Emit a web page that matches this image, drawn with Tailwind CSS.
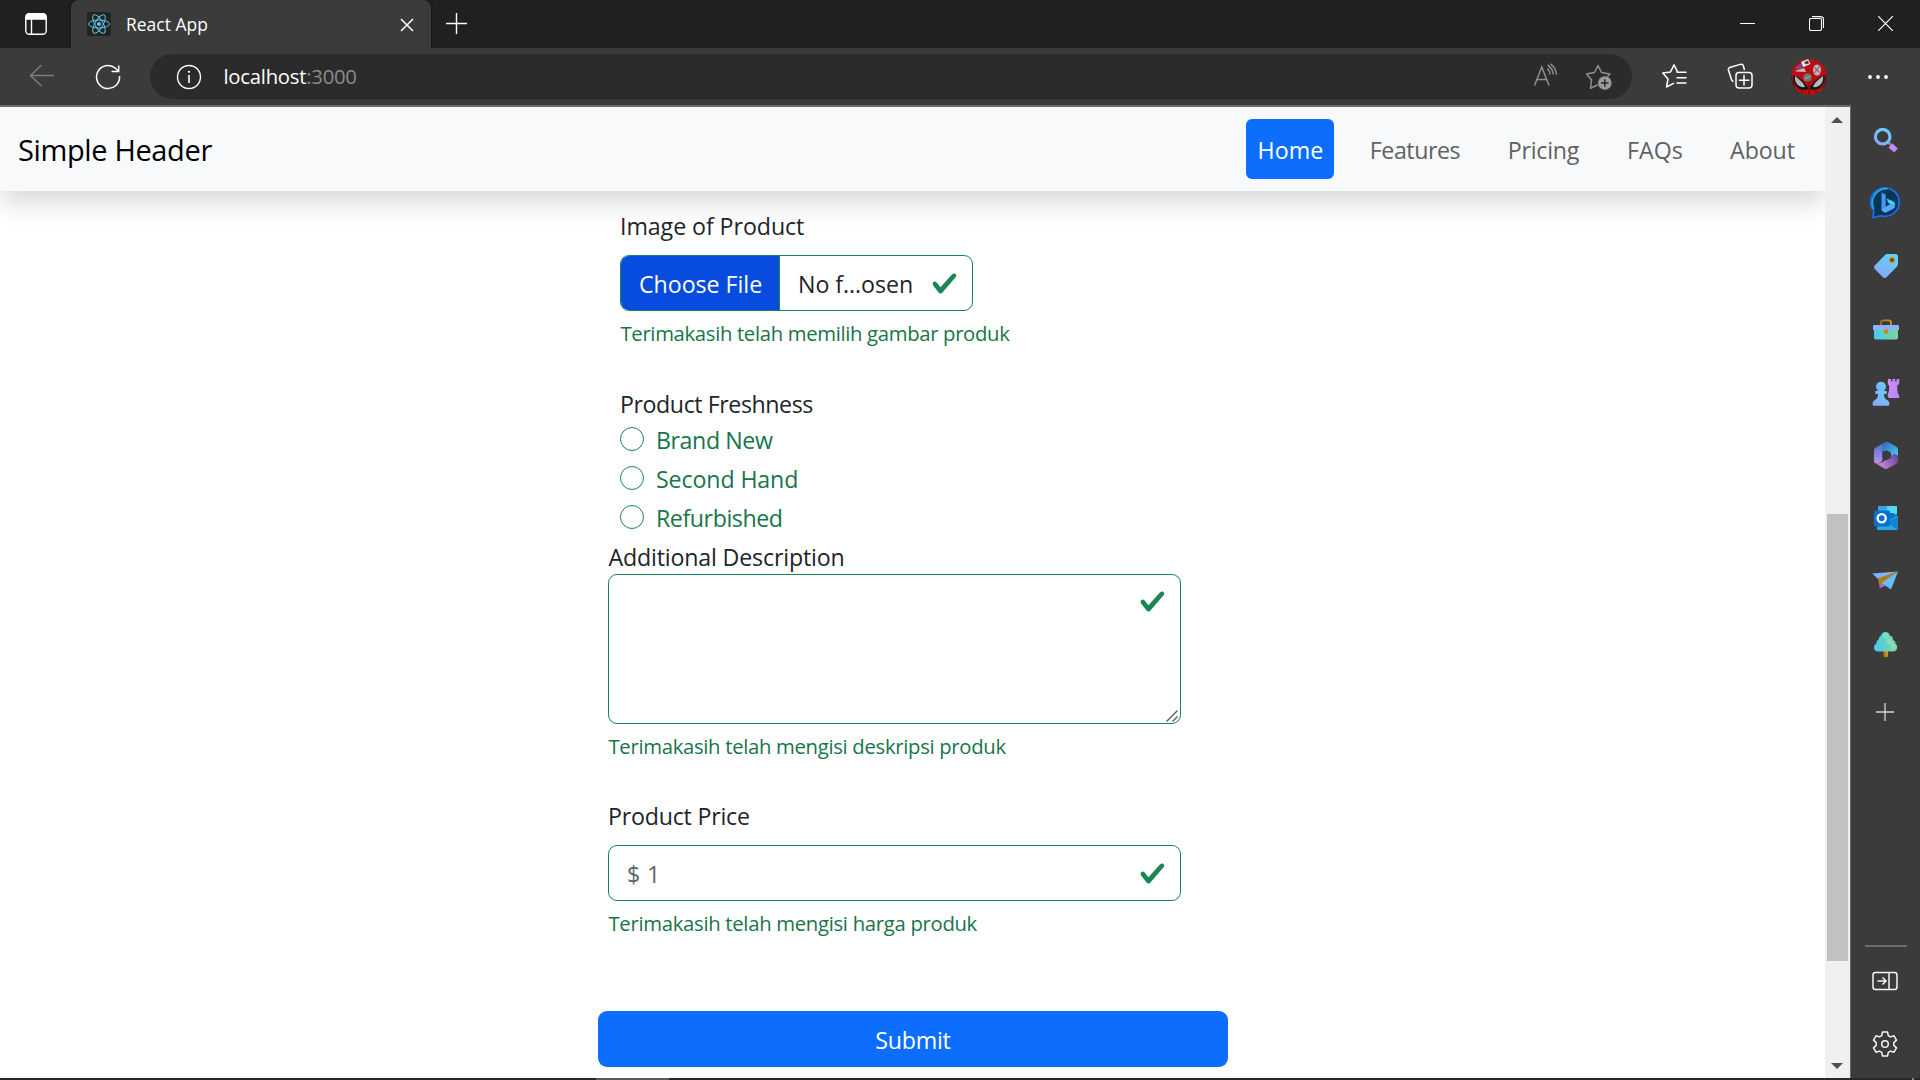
<!DOCTYPE html>
<html lang="en">
<head>
<meta charset="utf-8">
<title>React App</title>
<script src="https://cdn.jsdelivr.net/npm/@tailwindcss/browser@4"></script>
</head>
<body class="flex h-[1080px] w-[1920px] flex-col overflow-hidden bg-[#3b3b3b] font-['Open_Sans','Noto_Sans',sans-serif]">

<!-- shared definitions -->
<svg class="absolute h-0 w-0" aria-hidden="true">
  <defs>
    <linearGradient id="sky" x1="0.8" y1="0" x2="0.2" y2="1"><stop offset="0" stop-color="#62d2fb"/><stop offset="1" stop-color="#8aa5fc"/></linearGradient>
    <linearGradient id="violet" x1="0" y1="0" x2="1" y2="0.4"><stop offset="0" stop-color="#d78bf5"/><stop offset="1" stop-color="#b888fb"/></linearGradient>
    <linearGradient id="teal" x1="0" y1="0" x2="1" y2="0"><stop offset="0" stop-color="#45cdf0"/><stop offset="1" stop-color="#7ed49b"/></linearGradient>
    <linearGradient id="gold" x1="0" y1="0" x2="1" y2="0"><stop offset="0" stop-color="#a8700b"/><stop offset="1" stop-color="#d39a1b"/></linearGradient>
    <linearGradient id="ribbonA" x1="0" y1="0" x2="0" y2="1"><stop offset="0" stop-color="#3f72cf"/><stop offset="1" stop-color="#c18cf0"/></linearGradient>
    <linearGradient id="ribbonB" x1="0" y1="0" x2="1" y2="1"><stop offset="0" stop-color="#2f62c4"/><stop offset="1" stop-color="#4fd3f8"/></linearGradient>
    <linearGradient id="ribbonC" x1="0" y1="0.6" x2="1" y2="0.2"><stop offset="0" stop-color="#cf8fe0"/><stop offset="1" stop-color="#6a439f"/></linearGradient>
    <symbol id="check" viewBox="0 0 8 8"><path fill="#198754" d="M2.3 6.73.6 4.53c-.4-1.04.46-1.4 1.1-.8l1.1 1.4 3.4-3.8c.6-.63 1.6-.27 1.2.7l-4 4.6c-.43.5-.8.4-1.1.1z"/></symbol>
  </defs>
</svg>

<!-- tab strip -->
<div class="flex h-12 shrink-0 bg-[#202020]">
  <div class="flex w-[71px] items-center pl-[25px]">
    <svg class="size-[22px]" viewBox="0 0 22 22" fill="none" stroke="#fff" stroke-width="1.4"><rect x=".8" y=".8" width="20.4" height="20.4" rx="3.5"/><path d="M1 6V4a3 3 0 0 1 3-3h14a3 3 0 0 1 3 3v2z" fill="#fff"/><path d="M6.500 6v15"/></svg>
  </div>
  <div class="flex w-[360px] items-center rounded-t-lg bg-[#3b3b3b] pl-4 shadow-[0_0_3px_rgba(0,0,0,0.6)]">
    <svg class="size-6" viewBox="0 0 24 24" fill="none" stroke="#5cc9e8" stroke-width="1"><rect width="24" height="24" rx="2" fill="#222" stroke="none"/><ellipse cx="12" cy="12" rx="10.5" ry="4"/><ellipse cx="12" cy="12" rx="10.5" ry="4" transform="rotate(60 12 12)"/><ellipse cx="12" cy="12" rx="10.5" ry="4" transform="rotate(120 12 12)"/><circle cx="12" cy="12" r="2" fill="#5cc9e8" stroke="none"/></svg>
    <span class="-mt-px ml-[15px] w-[274px] text-[17.4px] leading-6 tracking-[0.04px] text-white">React App</span>
    <svg class="mt-px size-[14px] shrink-0" viewBox="0 0 14 14" stroke="#fff" stroke-width="1.5"><path d="M1 1l12 12M13 1L1 13"/></svg>
  </div>
  <div class="flex flex-1 items-center pb-px pl-[15px]">
    <svg class="size-[21px]" viewBox="0 0 21 21" stroke="#fff" stroke-width="1.4"><path d="M10.500 0v21M0 10.500h21"/></svg>
  </div>
  <div class="flex items-center gap-[54px] pr-[27px] pb-px">
    <svg class="size-[15px]" viewBox="0 0 15 15" stroke="#fff"><path d="M0 7.500h15"/></svg>
    <svg class="size-[15px]" viewBox="0 0 15 15" fill="none" stroke="#fff" stroke-width="1.1"><rect x=".5" y="2.5" width="12" height="12" rx="1.5"/><path d="M3 .6h8.500a3 3 0 0 1 3 3V12"/></svg>
    <svg class="size-[15px]" viewBox="0 0 15 15" stroke="#fff" stroke-width="1.2"><path d="M0 0l15 15M15 0L0 15"/></svg>
  </div>
</div>

<!-- toolbar -->
<div class="flex h-[57px] shrink-0 items-center bg-[#3b3b3b]">
  <svg class="-mt-px ml-[29px] h-[26px] w-[26px]" viewBox="0 0 26 26" fill="none" stroke="#7b7b7b" stroke-width="1.5"><path d="M25 12.500H1.500M12.500 2L1.500 12.500L12.500 23"/></svg>
  <svg class="ml-[40px] size-[26px]" viewBox="0 0 26 26" fill="none" stroke="#fff" stroke-width="1.500"><path d="M24.500 12A11.500 11.500 0 1 1 20.500 4.300L23.500 7.300M23.700 1.500V7.500H16.500"/></svg>
  <div class="ml-[29px] flex h-[45px] w-[1482px] items-center rounded-full bg-[#2b2b2b] pr-[19px] pl-[26px]">
    <svg class="size-[26px]" viewBox="0 0 26 26" fill="none" stroke="#fff" stroke-width="1.4"><circle cx="13" cy="13" r="11.500"/><path d="M13 11v8" stroke-width="1.600"/><circle cx="13" cy="7.800" r="1.100" fill="#fff" stroke="none"/></svg>
    <span class="-mt-[2px] ml-[21.5px] flex-1 text-[20.3px] leading-7 tracking-[-0.25px] text-white">localhost<span class="text-[#8b8b8b]">:3000</span></span>
    <svg class="-mt-[2px] h-[26px] w-[26px]" viewBox="0 0 26 26" fill="none" stroke="#8f8f8f" stroke-width="1.500"><path d="M1.500 22.500L8.800 4L16 22.500M4 16.500h9.700M14.500 5.500a9 9 0 0 1 2.500 6M14.500 2a13 13 0 0 1 5.800 9.500M17.500 .8a15 15 0 0 1 6 11"/></svg>
    <svg class="ml-[26px] h-[28px] w-[28px]" viewBox="0 0 28 28" fill="none" stroke="#8f8f8f" stroke-width="1.500" stroke-linejoin="round"><path d="M12.500 22L5.500 25.200L6.500 16.800L1.500 11L9.500 9.500L13 2.500L16.500 9.500L25 11L22.500 13.500"/><circle cx="19.800" cy="20" r="6.800" fill="#9a9a9a" stroke="none"/><path d="M19.800 16.200v7.600M16 20h7.600" stroke="#2b2b2b"/></svg>
  </div>
  <svg class="-mt-px ml-[29px] h-[26px] w-[27px]" viewBox="0 0 27 26" fill="none" stroke="#fff" stroke-width="1.500" stroke-linejoin="round" stroke-linecap="round"><path d="M12.500 20.300L5.500 24L7 16L1.800 10L9.500 8.900L13 1.800L16.500 8.900M16 9.300h9M16 14.800h9M16 20h9"/></svg>
  <svg class="-mt-px ml-[39px] h-[26px] w-[26px]" viewBox="0 0 26 26" fill="none" stroke="#fff" stroke-width="1.500" stroke-linecap="round"><rect x="9" y="9.500" width="16" height="15.500" rx="3"/><path d="M17 12.500v9.500M12.300 17.300h9.500M17.300 6.500L16.500 3.200C16 1.500 14.800 1 13.300 1.400L3.500 4.200C1.800 4.700 1 5.500 1.400 7L4.500 16.500C4.800 17.500 5 17.800 6 18.300"/></svg>
  <svg class="ml-[38px] size-9" viewBox="0 0 36 36"><clipPath id="av"><circle cx="18" cy="18" r="18"/></clipPath><g clip-path="url(#av)"><rect width="36" height="36" fill="#b90f13"/><path d="M0 14L6 36H0zM36 14L30 36h6z" fill="#402120"/><path d="M2 16C8 18 15 23 17.500 30C9 33 2 28 2 16zM34 16C28 18 21 23 18.500 30C27 33 34 28 34 16z" fill="#161414"/><path d="M4 17C8 20 13 24 14 28C8 29 3 24 4 17zM32 17C28 20 23 24 22 28C28 29 33 24 32 17z" fill="#b5b8b8"/><path d="M4 9l6-5 3 4-6 3z" fill="#8d4574"/><path d="M4 12l9-3 2 4-10-.5z" fill="#c7b5c4"/><path d="M10 3l7-3 2.500 5-7 3z" fill="#eee"/><path d="M13 3l4-1.500 1 3-3.500 1z" fill="#444"/><ellipse cx="26" cy="11" rx="4" ry="5.500" fill="#c9b0b4"/><path d="M23.500 8.500l5 5M28.500 7l-5 7" stroke="#7c6687" stroke-width="1.200"/><circle cx="16.500" cy="18.500" r="4" fill="#6d7775"/><path d="M13.500 20l6-3" stroke="#aaa"/><path d="M18 23v13M12 30l-2 6M24 30l2 6" stroke="#6d090b"/></g></svg>
  <svg class="ml-[40px] h-[6px] w-[22px]" viewBox="0 0 22 6" fill="#fff"><circle cx="3" cy="3" r="1.900"/><circle cx="11" cy="3" r="1.900"/><circle cx="19" cy="3" r="1.900"/></svg>
</div>

<div class="flex h-[973px] shrink-0">
  <!-- page viewport -->
  <div class="flex w-[1851px] border-t-2 border-r border-[#6b6b6b] bg-white">
    <div class="relative w-[1825px] overflow-hidden">
      <header class="flex h-[84px] items-center bg-[#f8f9fb] pr-2 pl-[18px] shadow-[0_12px_24px_rgba(0,0,0,0.15)]">
        <span class="flex-1 pt-[2px] text-[29px] leading-9 tracking-[-0.363px] text-black">Simple Header</span>
        <nav class="flex text-center text-[23.2px] leading-[60px] text-[#5f6163]">
          <a class="mr-3 h-[60px] w-[88px] rounded-md bg-[#0d6efd] pt-px pl-px tracking-[0.1px] text-white">Home</a>
          <a class="w-[138px] pt-px tracking-[-0.45px]">Features</a>
          <a class="w-[119px] pt-px tracking-[-0.23px]">Pricing</a>
          <a class="w-[104px] pt-px tracking-[0.032px]">FAQs</a>
          <a class="w-[110px] pt-px pl-px tracking-[-0.085px]">About</a>
        </nav>
      </header>

      <form class="ml-[598px] w-[630px] pt-[17px] text-[23.2px] leading-9 text-[#212529]">
        <div class="pl-[22px]">
          <label class="block tracking-[-0.07px]">Image of Product</label>
          <div class="mt-[11px] flex h-14 w-[353px] overflow-hidden rounded-[9px] border border-[#198754]">
            <div class="w-[159px] border-r border-[#198754] bg-[#084bdf] pt-[2px] pl-[18px] tracking-[-0.034px] text-white">
              <span class="block pt-[8px]">Choose File</span>
            </div>
            <span class="w-[151px] pt-[10px] pl-[18px] tracking-[-0.06px]">No f...osen</span>
            <svg class="mt-[13.5px] size-[27px]"><use href="#check"/></svg>
          </div>
          <p class="mt-[6px] pl-[0.5px] text-[20.3px] leading-8 tracking-[-0.33px] text-[#17754a]">Terimakasih telah memilih gambar produk</p>
          <div class="mt-[37px] tracking-[-0.43px]">Product Freshness</div>
          <div class="flex flex-col gap-[3px] pb-[3px] text-[#17754a]">
            <label class="flex"><i class="mt-[5px] mr-[12px] size-6 rounded-full border border-[#198754]"></i><span class="tracking-[-0.42px]">Brand New</span></label>
            <label class="flex"><i class="mt-[5px] mr-[12px] size-6 rounded-full border border-[#198754]"></i><span class="tracking-[-0.12px]">Second Hand</span></label>
            <label class="flex"><i class="mt-[5px] mr-[12px] size-6 rounded-full border border-[#198754]"></i><span class="tracking-[-0.44px]">Refurbished</span></label>
          </div>
        </div>
        <div class="w-[583px] pl-[10px]">
          <label class="block h-[35px] pl-[0.5px] tracking-[-0.17px]">Additional Description</label>
          <div class="relative h-[150px]">
            <textarea class="block h-full w-full resize-none rounded-[9px] border border-[#198754] bg-white"></textarea>
            <svg class="absolute top-[14px] right-[15px] size-[27px]"><use href="#check"/></svg>
            <svg class="absolute right-[3px] bottom-[2px] size-3" viewBox="0 0 12 12" stroke="#555" stroke-width="1.300"><path d="M.5 11.500L11.500 .5M6.500 11.500L11.500 6.500"/></svg>
          </div>
          <p class="mt-[6px] pl-[0.5px] text-[20.3px] leading-8 tracking-[-0.31px] text-[#17754a]">Terimakasih telah mengisi deskripsi produk</p>
          <label class="mt-9 block tracking-[-0.22px]">Product Price</label>
          <div class="relative mt-[11px] h-14">
            <input class="block h-full w-full rounded-[9px] border border-[#198754] bg-white pt-[2px] pl-[18px] tracking-[0.4px] placeholder:text-[#5f6569]" placeholder="$ 1">
            <svg class="absolute top-[14.5px] right-[15px] size-[27px]"><use href="#check"/></svg>
          </div>
          <p class="mt-[6px] pl-[0.5px] text-[20.3px] leading-8 tracking-[-0.3px] text-[#17754a]">Terimakasih telah mengisi harga produk</p>
        </div>
        <button type="button" class="mt-[72px] block h-14 w-full rounded-[9px] bg-[#0d6efd] pt-[2px] tracking-[-0.23px] text-white">Submit</button>
      </form>
    </div>
    <!-- scrollbar -->
    <div class="flex w-[25px] flex-col items-center bg-[#f0f0f0] pr-px">
      <svg class="mt-[10px] h-[6px] w-[12px]" viewBox="0 0 12 6" fill="#505050"><path d="M6 0l6 6H0z"/></svg>
      <div class="mt-[391px] h-[447px] w-[21px] bg-[#c1c1c1]"></div>
      <svg class="mt-[102px] h-[6px] w-[12px]" viewBox="0 0 12 6" fill="#505050"><path d="M6 6l6-6H0z"/></svg>
    </div>
  </div>

  <!-- sidebar -->
  <aside class="flex w-[69px] flex-col items-center pt-1">
    <div class="flex h-[63px] items-center"><svg class="size-[33px]" viewBox="0 0 33 33" fill="none"><path d="M19 18l3 3" stroke="#8a8a8a" stroke-width="2.500"/><path d="M21.500 21.500l5.500 5" stroke="url(#violet)" stroke-width="5.500"/><circle cx="13.700" cy="12.700" r="7.300" stroke="url(#sky)" stroke-width="3.200"/></svg></div>
    <div class="flex h-[63px] items-center pl-[2px]"><svg class="size-[33px]" viewBox="0 0 33 33"><path d="M3 30.500L3.800 24A14.200 14.200 0 1 1 11 28.800C9 29.500 6 30 3 30.500z" fill="#0b3558" stroke="#1b6ef0" stroke-width="1.700"/><path d="M3.800 22A14.200 14.200 0 0 1 17.500 1.600" fill="none" stroke="#1fb4e8" stroke-width="1.700"/><path d="M11.500 5.500l4.200 2v12l-4.200 3.500z" fill="#3f9af3"/><path d="M16.500 11.500l6 2.500c2 1 2.800 2.500 2.500 5l-5-2-2-1.500z" fill="#38d5ea"/><path d="M11.500 22l9-5 4.500 2c0 2-2 3-3 3.500l-6 3c-2 .5-4.500-1-4.500-3.500z" fill="#5ba7fa"/></svg></div>
    <div class="flex h-[63px] items-center"><svg class="size-[33px]" viewBox="0 0 33 33"><path d="M18 4h8.500C28 4 29 5 29 6.500V14c0 1-.4 1.800-1 2.500L17.500 27.200c-1 1-2.600 1-3.600 0L6 19.300c-1.300-1.300-1.300-2.800 0-4L16 5c.6-.6 1.200-1 2-1z" fill="url(#sky)"/><circle cx="23" cy="10" r="2.300" fill="#3b3b3b" stroke="#c98a10" stroke-width="1.500"/></svg></div>
    <div class="flex h-[63px] items-center"><svg class="size-[33px]" viewBox="0 0 33 33"><path d="M12 12V9.500C12 8 13 7.300 14.500 7.300h5C21 7.300 22 8 22 9.500V12" fill="none" stroke="url(#gold)" stroke-width="1.800"/><path d="M5 15h24v9.500c0 1-.7 2-2 2H7c-1.300 0-2-1-2-2z" fill="url(#teal)"/><path d="M5.500 12h23c1 0 1.500.6 1.500 1.400V17H4v-3.600C4 12.600 4.500 12 5.500 12z" fill="#8cb2fc"/><rect x="15" y="16" width="4.200" height="5" rx="2" fill="#c98a10"/></svg></div>
    <div class="flex h-[63px] items-center"><svg class="size-[33px]" viewBox="0 0 33 33"><path d="M19 3h3v2.500h1.500V3h2.600v2.500h1.500V3h2.600v5l-2 1.500c0 5 .3 7.500 1.300 9 .6.700 1 1.500.8 3.500H19.500l-1-3c1.300-2 1.700-5 1.700-9.500L18.700 8z" fill="url(#violet)"/><circle cx="12" cy="10.800" r="5" fill="url(#sky)"/><path d="M6.300 15h11.400v3H15c0 3 .5 4.500 3 6 1.800 1 2.500 2 2.500 4.500 0 .8-.5 1.200-1.500 1.200H5c-1 0-1.500-.4-1.500-1.200C3.500 26 4 25 6 24c2.500-1.500 3-3 3-6H6.300z" fill="url(#sky)"/></svg></div>
    <div class="flex h-[63px] items-center"><svg class="size-[33px]" viewBox="0 0 33 33"><path d="M16.500 3L7 8.500C5.500 9.400 5 10.200 5 11.700V22c0 1.500.8 2.500 2 2.500 3.500 0 6.500-1.500 6.500-5v-6.500c0-4 .5-7.500 3-10z" fill="url(#ribbonA)"/><path d="M16.500 3c1-.4 2-.3 3 .3l7.500 4.300c1.300.8 2 2 2 3.400V19c0 .8-.6 1-1.200.7L22 16.200c0-2.700-4.500-5.200-8.500-3.700C13.500 8.500 14 5 16.500 3z" fill="url(#ribbonB)"/><path d="M29 17v4.500c0 1.500-.6 2.700-2 3.500l-8 4.300c-1.500.8-2.700.8-4 0l-8-4.800c4 0 7-1.500 11-4.500l5-3.800c1.500-1 4-2 6 .8z" fill="url(#ribbonC)"/><path d="M17.700 11.200l4.300 2.500v5L17.700 21.200l-4.200-2.500v-5z" fill="#3b3b3b"/></svg></div>
    <div class="flex h-[63px] items-center"><svg class="size-[33px]" viewBox="0 0 33 33"><path d="M9 4h19v12H9z" fill="#1683d0"/><path d="M9 4h10v6H9z" fill="#35a9e8"/><path d="M18 4h10v8H18z" fill="#50d9ff"/><path d="M18 11h7v7h-7z" fill="#0c72c4"/><path d="M8 14l10 5 11-5v13c0 .6-.5 1-1 1H9c-.6 0-1-.4-1-1z" fill="#28a8ea"/><path d="M29 15v13L17 20z" fill="#1483cf"/><rect x="5" y="8.500" width="16" height="16" rx="1.500" fill="#0b6fce"/><circle cx="12.700" cy="16.200" r="4.100" fill="none" stroke="#fff" stroke-width="2.300"/></svg></div>
    <div class="flex h-[63px] items-center"><svg class="size-[33px]" viewBox="0 0 33 33"><path d="M3.300 8.500L29 6.500 9 14z" fill="#79b5fd"/><path d="M9 13.500L29 6.500 13 19l-2.200 4.500z" fill="#b97b10"/><path d="M12.500 18L29 6.500 22 24.500z" fill="#68bdfc"/><path d="M10.800 23.500l1.700-5.500 3.800 2.500z" fill="#9a75ee"/></svg></div>
    <div class="flex h-[63px] items-center"><svg class="size-[33px]" viewBox="0 0 33 33"><rect x="14.500" y="21" width="4.500" height="8" rx="1" fill="url(#gold)"/><path d="M16.500 4c2.500 0 4 1.500 4.200 3.500 2.500.5 3.500 2.300 3.300 4.500 2 .7 2.700 2.200 2.500 4 1.500 1 2 2.400 1.500 4.500-.4 2-1.800 3-4 3H9c-2.300 0-4-1.300-4-4 0-2 1-3.300 2.500-4-.3-2 .7-3.500 2.300-4-.1-2 .8-3.200 2.400-4 .2-2 1.800-3.500 4.300-3.500z" fill="url(#teal)"/><g fill="#8ee6bd" opacity=".65"><circle cx="17" cy="8" r="3"/><circle cx="20.500" cy="13.500" r="3"/><circle cx="24.500" cy="18.500" r="3"/></g></svg></div>
    <div class="flex h-[72px] items-center pr-px"><svg class="size-[18px]" viewBox="0 0 18 18" stroke="#d8d8d8" stroke-width="1.300"><path d="M9 0v18M0 9h18"/></svg></div>
    <div class="mt-[197px] h-[2px] w-[42px] bg-[#6b6b6b]"></div>
    <svg class="mt-[24px] mr-px h-[20px] w-[26px]" viewBox="0 0 26 20" fill="none" stroke="#f4f4f4" stroke-width="1.500"><rect x="1" y="1.500" width="24" height="17" rx="2.500"/><path d="M17 1.500v17M5.500 10h8M10.500 6.500L14 10l-3.500 3.500"/></svg>
    <svg class="mt-[39px] mr-px size-[28px]" viewBox="0 0 28 28" fill="none" stroke="#f4f4f4" stroke-width="1.500" stroke-linejoin="round"><circle cx="14" cy="14" r="3.300"/><path d="M11.500 2h5l.8 3.600 2.200 1.300 3.500-1.100 2.500 4.300-2.700 2.500v2.800l2.700 2.500-2.500 4.300-3.500-1.100-2.200 1.300-.8 3.600h-5l-.8-3.600-2.200-1.300-3.500 1.100-2.500-4.300 2.700-2.500v-2.800L2.500 10.100 5 5.800l3.500 1.100 2.200-1.300z"/></svg>
  </aside>
</div>
<div class="flex h-[2px] shrink-0 bg-[#2a2729] pl-[596px]"><div class="w-[73px] bg-[#5a5859]"></div><div class="ml-[1243px] w-[2px] bg-[#8a8889]"></div></div>
</body>
</html>
